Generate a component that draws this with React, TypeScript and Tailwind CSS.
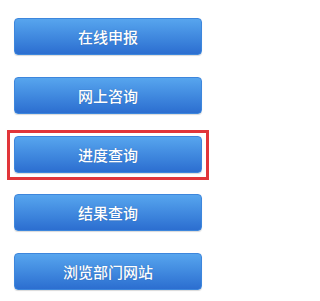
import React from "react";

const items = ["在线申报", "网上咨询", "进度查询", "结果查询", "浏览部门网站"];

const NavButton = ({ label }: { label: string }) => (
  <button
    className="flex h-[37px] w-[188px] items-center justify-center rounded-[4px] border border-[#3d86dc] bg-gradient-to-b from-[#57a5ee] to-[#2c6ed0] text-[15px] font-medium leading-none text-white shadow-[0_1px_1px_rgba(0,0,0,0.15)] [text-shadow:0_0_1px_rgba(20,60,120,0.5)]"
    style={{ fontFamily: '"Noto Sans CJK SC", "Noto Sans", sans-serif' }}
  >
    {label}
  </button>
);

export default function App() {
  return (
    <div className="flex h-[301px] w-[217px] flex-col bg-white pt-[18px] pl-[14px]">
      <NavButton label={items[0]} />
      <div className="mt-[22px]">
        <NavButton label={items[1]} />
      </div>
      <div className="-ml-[7px] mt-[16px] w-[202px] border-[3px] border-[#e1353a] pt-[3px] pb-[4px] pl-[4px]">
        <NavButton label={items[2]} />
      </div>
      <div className="mt-[14px]">
        <NavButton label={items[3]} />
      </div>
      <div className="mt-[22px]">
        <NavButton label={items[4]} />
      </div>
    </div>
  );
}
